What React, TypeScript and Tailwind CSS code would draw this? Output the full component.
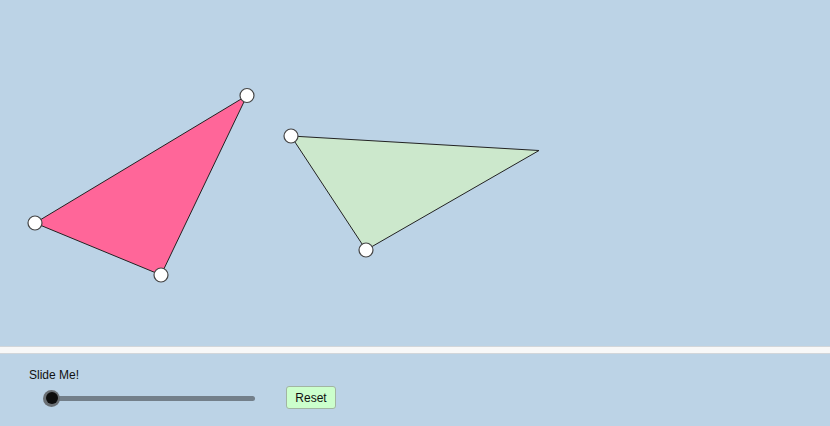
import React from "react";

type Pt = [number, number];

const pink: Pt[] = [
  [35, 223],
  [247, 95.5],
  [161, 275],
];
const green: Pt[] = [
  [291, 136],
  [539, 150.5],
  [366, 250],
];

const poly = (p: Pt[]) => p.map(([x, y]) => `${x},${y}`).join(" ");

function Handle({ p }: { p: Pt }) {
  return <circle cx={p[0]} cy={p[1]} r={7} fill="#ffffff" stroke="#444444" strokeWidth={1.2} />;
}

export default function App() {
  return (
    <div
      className="flex h-[426px] w-[830px] flex-col bg-[#bcd3e6]"
      style={{ fontFamily: '"Liberation Sans", Arial, sans-serif' }}
    >
      <div className="h-[346px] w-full">
        <svg width={830} height={346} viewBox="0 0 830 346">
          <polygon points={poly(pink)} fill="#ff6699" stroke="#222222" strokeWidth={1} strokeLinejoin="round" />
          <polygon points={poly(green)} fill="#cce8cc" stroke="#222222" strokeWidth={1} strokeLinejoin="round" />
          {pink.map((p, i) => (
            <Handle key={`a${i}`} p={p} />
          ))}
          <Handle p={green[0]} />
          <Handle p={green[2]} />
        </svg>
      </div>
      <div className="h-[8px] w-full border-y border-[#d2d6da] bg-[#f8f8f8]" />
      <div className="relative flex-1">
        <div className="pl-[29px] pt-[14px] text-[12px] leading-[14px] text-[#111]">Slide Me!</div>
        <div className="mt-[4px] flex items-center">
          <div className="relative ml-[43px] h-[16px] w-[212px]">
            <div className="absolute left-[7px] right-0 top-[6px] h-[5px] rounded-full bg-[#737f8a]" />
            <div className="absolute left-0 top-0 flex h-[17px] w-[17px] items-center justify-center rounded-full bg-[#6a6f74]">
              <div className="h-[12px] w-[12px] rounded-full bg-[#0d0d0d]" />
            </div>
          </div>
          <button className="ml-[31px] flex h-[23px] w-[50px] items-center justify-center rounded-[3px] border border-[#a2b5a2] bg-[#ccffcc] text-[12px] text-[#111]">
            Reset
          </button>
        </div>
      </div>
    </div>
  );
}
